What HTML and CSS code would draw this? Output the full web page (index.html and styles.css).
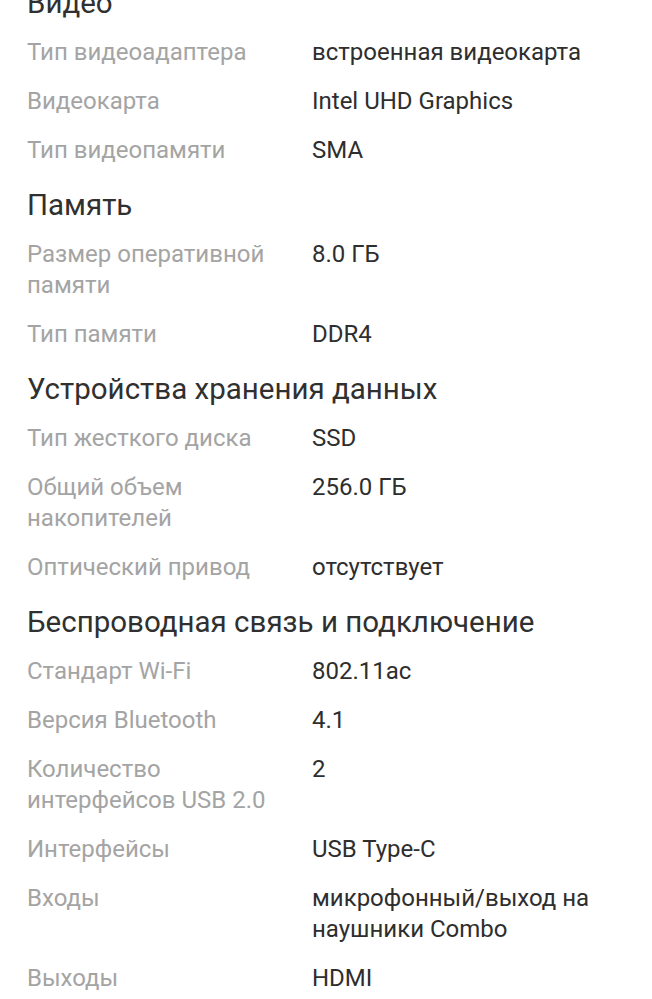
FILE: index.html
```html
<!DOCTYPE html>
<html lang="ru">
<head>
<meta charset="utf-8">
<link rel="stylesheet" href="styles.css">
</head>
<body>
<div class="page">
  <section class="group">
    <h2 class="title">Видео</h2>
    <div class="row"><div class="label">Тип видеоадаптера</div><div class="value">встроенная видеокарта</div></div>
    <div class="row"><div class="label">Видеокарта</div><div class="value">Intel UHD Graphics</div></div>
    <div class="row"><div class="label">Тип видеопамяти</div><div class="value">SMA</div></div>
  </section>
  <section class="group">
    <h2 class="title">Память</h2>
    <div class="row"><div class="label">Размер оперативной памяти</div><div class="value">8.0 ГБ</div></div>
    <div class="row"><div class="label">Тип памяти</div><div class="value">DDR4</div></div>
  </section>
  <section class="group">
    <h2 class="title">Устройства хранения данных</h2>
    <div class="row"><div class="label">Тип жесткого диска</div><div class="value">SSD</div></div>
    <div class="row"><div class="label">Общий объем накопителей</div><div class="value">256.0 ГБ</div></div>
    <div class="row"><div class="label">Оптический привод</div><div class="value">отсутствует</div></div>
  </section>
  <section class="group">
    <h2 class="title">Беспроводная связь и подключение</h2>
    <div class="row"><div class="label">Стандарт Wi-Fi</div><div class="value">802.11ac</div></div>
    <div class="row"><div class="label">Версия Bluetooth</div><div class="value">4.1</div></div>
    <div class="row"><div class="label">Количество интерфейсов USB 2.0</div><div class="value">2</div></div>
    <div class="row"><div class="label">Интерфейсы</div><div class="value">USB Type-C</div></div>
    <div class="row"><div class="label">Входы</div><div class="value">микрофонный/выход на наушники Combo</div></div>
    <div class="row"><div class="label">Выходы</div><div class="value">HDMI</div></div>
  </section>
</div>
</body>
</html>
```

FILE: styles.css
```css
html, body {
  margin: 0;
  padding: 0;
  background: #ffffff;
}
body {
  font-family: Roboto, "Noto Sans", sans-serif;
  overflow: hidden;
}
.page {
  margin-top: -27px;
  padding: 0 27px;
}
.title {
  margin: 0;
  padding: 12px 0 7px;
  font-size: 29.5px;
  line-height: 36px;
  font-weight: 400;
  color: #303030;
}
.row {
  display: grid;
  grid-template-columns: 260px 1fr;
  column-gap: 25px;
  padding: 9px 0;
  font-size: 24px;
  line-height: 31px;
}
.label {
  color: #a4a4a4;
}
.value {
  color: #2e2e2e;
}
```
